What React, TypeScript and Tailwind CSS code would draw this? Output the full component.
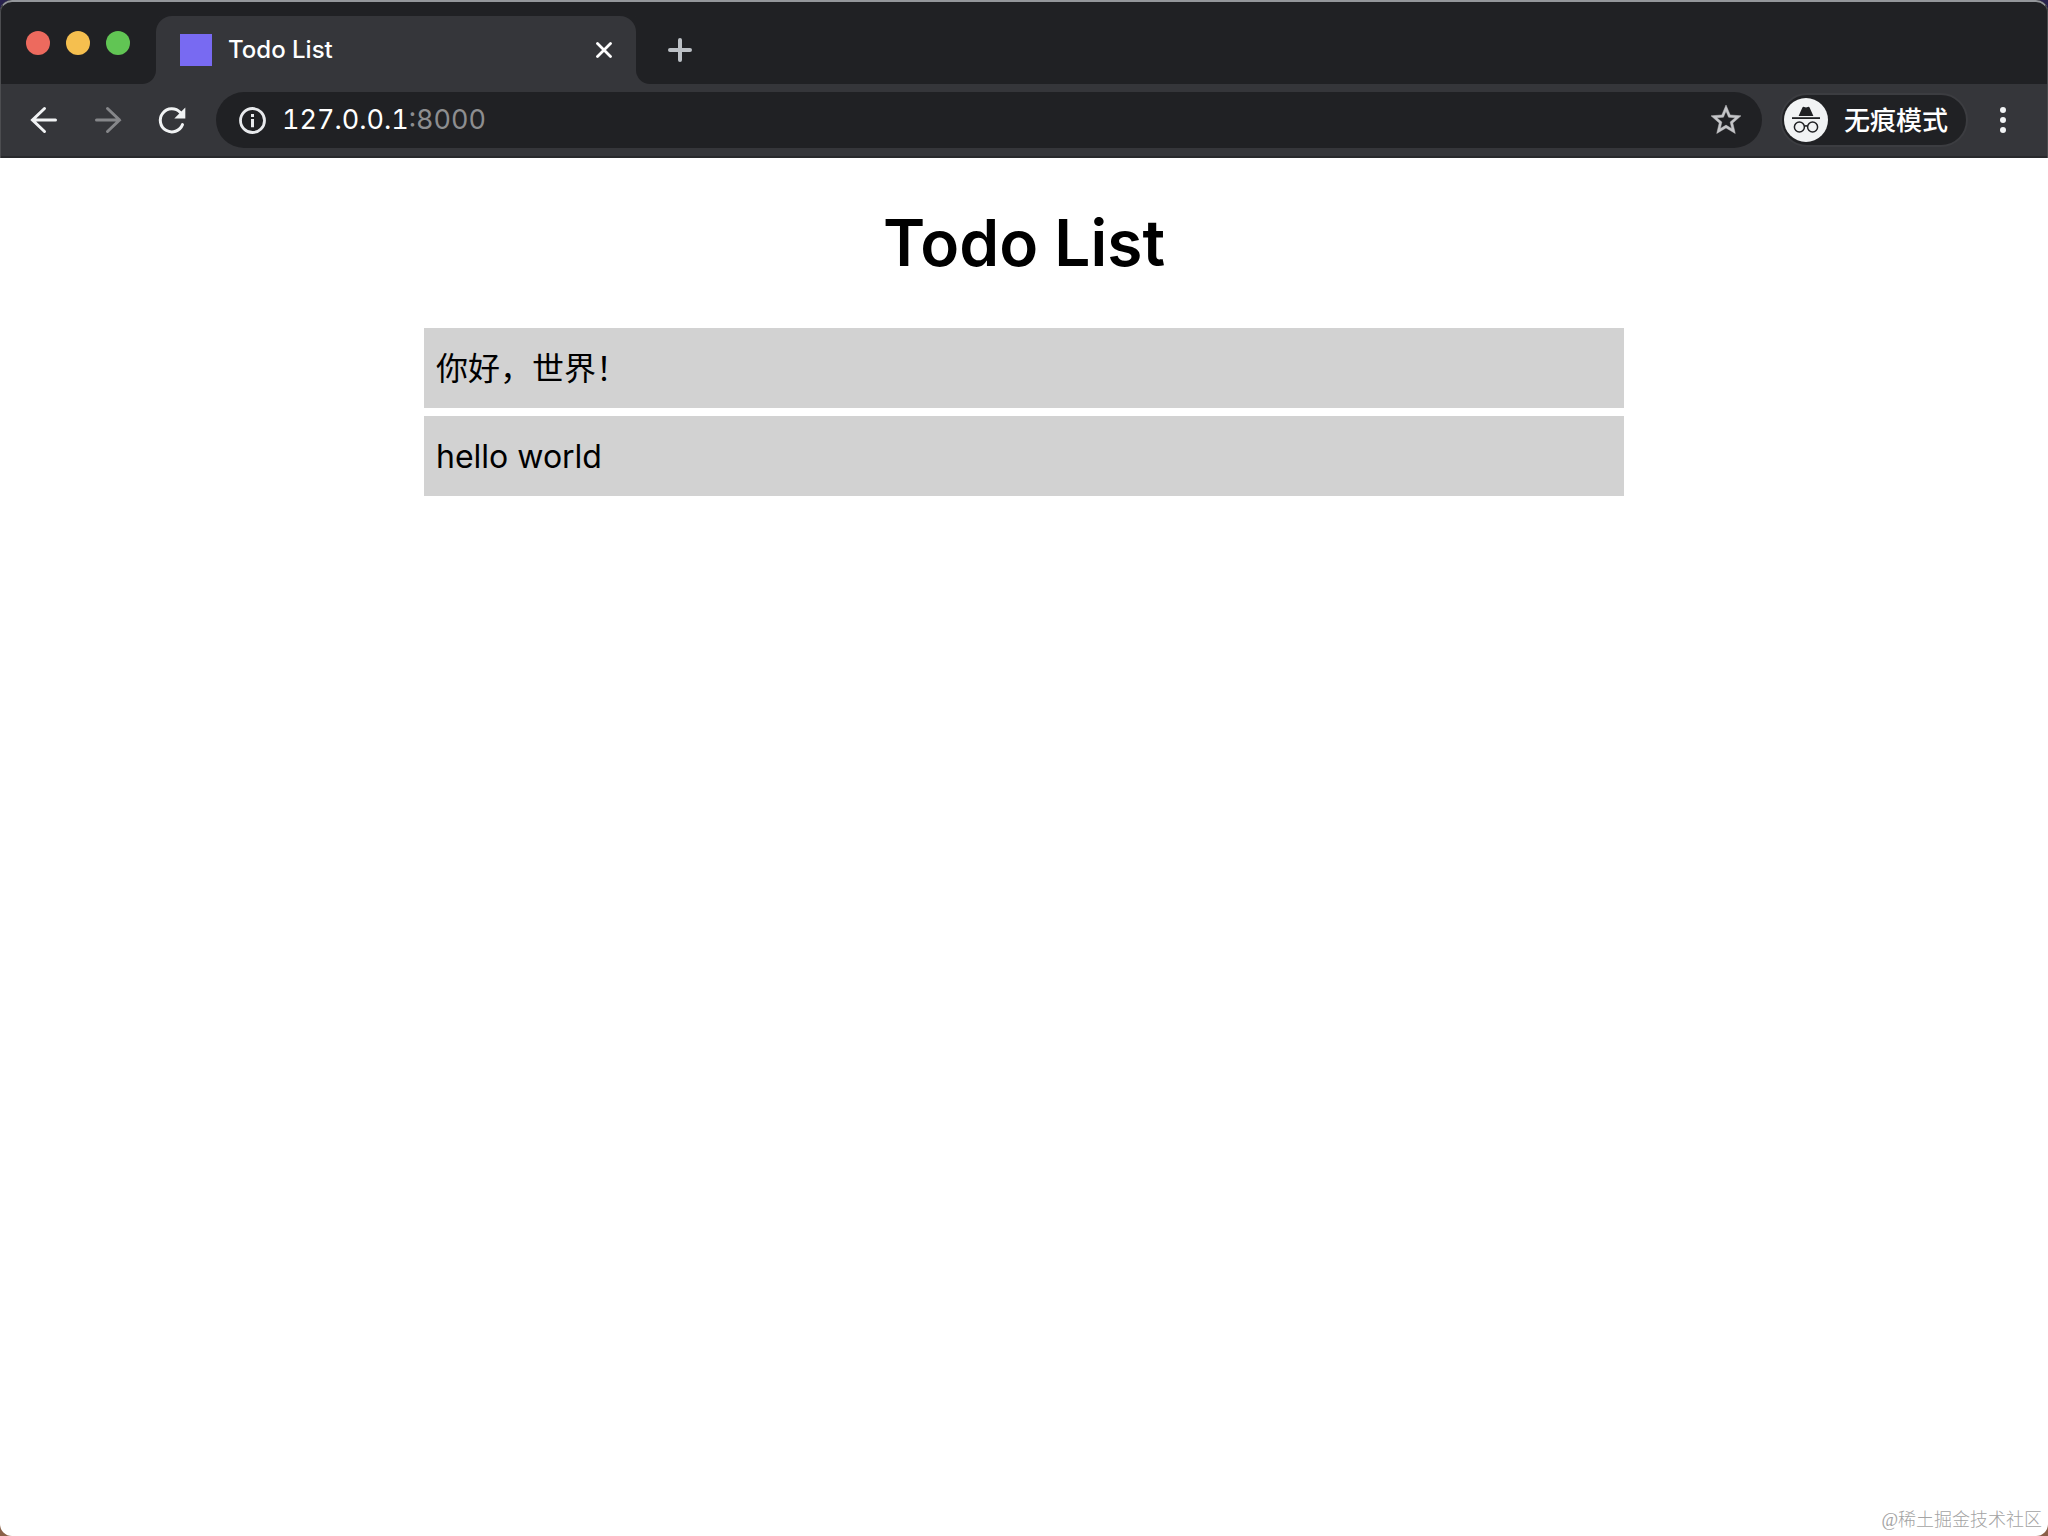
import React from "react";

const todos = [
  { id: 1, text: "你好，世界！" },
  { id: 2, text: "hello world" },
];

const ArrowIcon: React.FC<{ className?: string }> = ({ className }) => (
  <svg viewBox="0 0 32 32" className={className} fill="none" stroke="currentColor" strokeWidth="3">
    <path d="M27.5 16H4.5M16.5 4.5 4.5 16l12 11.5" strokeLinecap="round" />
  </svg>
);

const ReloadIcon = () => (
  <svg viewBox="0 0 32 32" className="size-8">
    <path
      d="M26.5 20.6A11.5 11.5 0 1 1 24.3 8.6"
      fill="none"
      stroke="currentColor"
      strokeWidth="3"
      strokeLinecap="round"
    />
    <path d="M29.3 3.6v11h-11z" fill="currentColor" />
  </svg>
);

const InfoIcon = () => (
  <svg viewBox="0 0 28 28" className="size-7 shrink-0 text-[#e8eaed]">
    <circle cx="14.5" cy="14.5" r="12" fill="none" stroke="currentColor" strokeWidth="2.8" />
    <path d="M13 8h3v3h-3zM13 13h3v8.2h-3z" fill="currentColor" />
  </svg>
);

const StarIcon = () => (
  <svg viewBox="0 0 24 24" className="size-9" fill="currentColor" stroke="currentColor" strokeWidth="0.3">
    <path d="M22 9.24l-7.19-.62L12 2 9.19 8.63 2 9.24l5.46 4.73L5.82 21 12 17.27 18.18 21l-1.63-7.03L22 9.24zM12 15.4l-3.76 2.27 1-4.28-3.32-2.88 4.38-.38L12 6.1l1.71 4.04 4.38.38-3.32 2.88 1 4.28L12 15.4z" />
  </svg>
);

const IncognitoIcon = () => (
  <svg viewBox="0 0 44 44" className="size-11 shrink-0">
    <circle cx="22" cy="22" r="22" fill="#f1f3f4" />
    <g fill="#202124">
      <path d="M14.6 18 18.3 9.8Q18.8 8.4 20.2 8.9L22 9.6 23.8 8.9Q25.2 8.4 25.7 9.8L29.4 18z" />
      <path d="M8 19.2h28v1.8H8z" />
    </g>
    <g fill="none" stroke="#202124" strokeWidth="1.5">
      <circle cx="15.4" cy="29" r="5" />
      <circle cx="28.6" cy="29" r="5" />
      <path d="M20.4 28.4q1.6-1.2 3.2 0" />
    </g>
  </svg>
);

const TabStrip = () => (
  <div className="flex h-[84px] bg-[#35363a]">
    <div className="flex w-[156px] shrink-0 items-center gap-4 rounded-br-[14px] bg-[#202124] pt-0.5 pl-[26px]">
      <button aria-label="Close window" className="size-6 rounded-full bg-[#ed6a5e]" />
      <button aria-label="Minimize window" className="size-6 rounded-full bg-[#f5bf4f]" />
      <button aria-label="Zoom window" className="size-6 rounded-full bg-[#61c554]" />
    </div>
    <div className="w-[480px] shrink-0 bg-linear-to-b from-[#202124] from-50% to-[#35363a] to-50% pt-4">
      <div className="flex h-full items-center rounded-t-2xl bg-[#35363a] px-6">
        <span className="size-8 bg-[#786af2]" />
        <span className="ml-4 flex-1 text-2xl font-medium text-white">Todo List</span>
        <button aria-label="Close tab" className="text-white">
          <svg viewBox="0 0 16 16" className="size-4" stroke="currentColor" strokeWidth="2.8" strokeLinecap="round">
            <path d="M1.5 1.5l13 13M14.5 1.5l-13 13" />
          </svg>
        </button>
      </div>
    </div>
    <div className="flex flex-1 items-center rounded-bl-[14px] bg-[#202124] pt-4 pl-8">
      <button aria-label="New tab" className="text-[#bdc1c6]">
        <svg viewBox="0 0 24 24" className="size-6" stroke="currentColor" strokeWidth="4" strokeLinecap="round">
          <path d="M12 2v20M2 12h20" />
        </svg>
      </button>
    </div>
  </div>
);

const Toolbar = () => (
  <div className="flex h-[74px] items-center border-b-2 border-[#28292c] bg-[#35363a] pr-[38px] pl-7">
    <div className="flex items-center gap-8 text-[#f1f3f4]">
      <button aria-label="Back">
        <ArrowIcon className="size-8" />
      </button>
      <button aria-label="Forward" className="text-[#86878a]">
        <ArrowIcon className="size-8 rotate-180" />
      </button>
      <button aria-label="Reload">
        <ReloadIcon />
      </button>
    </div>
    <div className="ml-7 flex h-14 flex-1 items-center rounded-full bg-[#202124] pr-[18px] pl-[22px]">
      <InfoIcon />
      <a href="#" className="ml-4 flex-1 text-[27px] text-white tabular-nums">
        127.0.0.1<span className="text-[#8d8e90]">:8000</span>
      </a>
      <button aria-label="Bookmark this tab" className="text-[#c4c5c8]">
        <StarIcon />
      </button>
    </div>
    <button className="ml-[18px] flex h-[54px] items-center gap-4 rounded-full border-2 border-[#3c3d41] bg-[#202124] pr-[18px] pl-0.5 text-[26px] font-medium text-white">
      <IncognitoIcon />
      无痕模式
    </button>
    <button aria-label="Menu" className="ml-7 flex flex-col items-center gap-1 px-1">
      <span className="size-1.5 rounded-full bg-[#f1f3f4]" />
      <span className="size-1.5 rounded-full bg-[#f1f3f4]" />
      <span className="size-1.5 rounded-full bg-[#f1f3f4]" />
    </button>
  </div>
);

export default function App() {
  return (
    <div className="flex min-h-screen flex-col bg-linear-to-b from-[#28224d] to-[#8a6048] font-[Inter,'Noto_Sans_CJK_SC',sans-serif]">
      <div className="flex flex-1 flex-col overflow-hidden rounded-xl bg-white">
        <header className="relative">
          <TabStrip />
          <Toolbar />
          {/* Light rim along the window edge */}
          <div className="pointer-events-none absolute inset-0 rounded-t-xl border-x border-t-2 border-x-[#4c4d50] border-t-[#94979b]" />
        </header>

        <main className="flex flex-1 flex-col items-center px-6 pt-10 text-black">
          <h1 className="text-[64px] leading-[90px] font-semibold">Todo List</h1>
          <ul className="mt-10 flex w-full max-w-[1200px] flex-col gap-2">
            {todos.map((todo) => (
              <li key={todo.id} className="flex h-20 items-center bg-[#d2d2d2] px-3 pt-0.5 text-[32px]">
                {todo.text}
              </li>
            ))}
          </ul>
        </main>

        <footer className="pr-1.5 pb-0.5 text-right font-['Liberation_Serif','Noto_Sans_CJK_SC',serif] text-lg font-light text-[#a3a3a3]">
          @稀土掘金技术社区
        </footer>
      </div>
    </div>
  );
}
